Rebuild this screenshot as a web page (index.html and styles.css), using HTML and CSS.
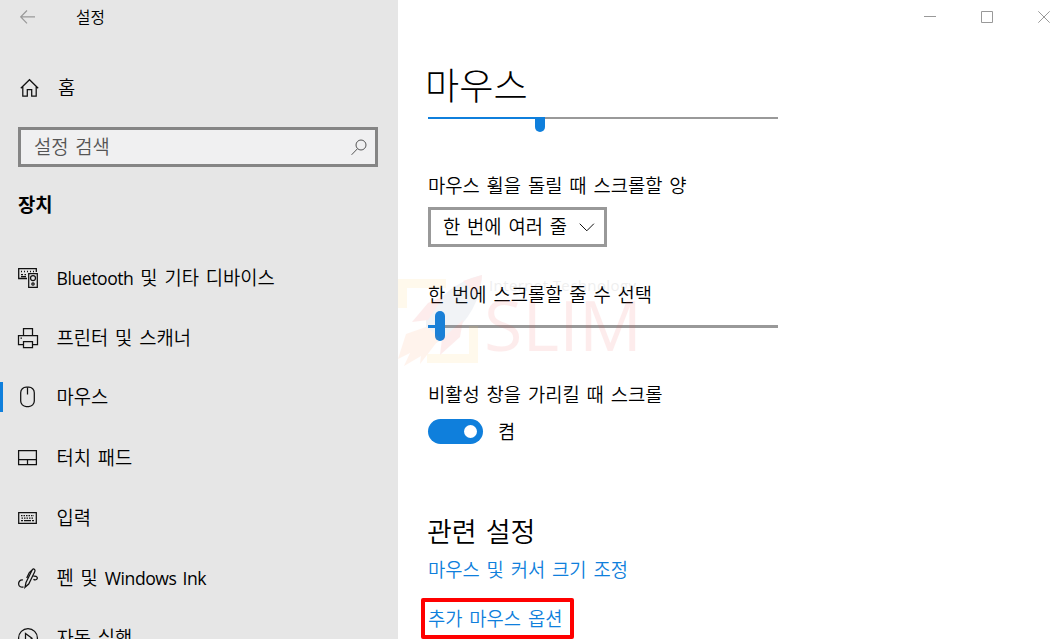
FILE: index.html
```html
<!DOCTYPE html>
<html lang="ko">
  <head>
    <meta charset="UTF-8" />
    <meta name="viewport" content="width=device-width, initial-scale=1.0" />
    <title>설정</title>
    <link rel="stylesheet" href="styles.css">
  </head>
  <body>
    <aside class="sidebar">
      <header class="titlebar">
        <svg class="back" width="16" height="14" viewBox="0 0 16 14"><path d="M7 .5.8 6.9 7 13.3M.8 6.9H15" /></svg>
        <span class="app-name">설정</span>
      </header>
      <a class="nav-item home">
        <svg class="icon" viewBox="0 0 20 20"><path d="M.8 10.3 9.5 1.7l8.7 8.6M2.8 8.8v9.4h4.5v-6.7h4.4v6.7h4.5V8.8" /></svg>
        <span>홈</span>
      </a>
      <div class="search">
        <span>설정 검색</span>
        <svg width="16" height="17" viewBox="0 0 16 17"><circle cx="10" cy="6" r="5" /><path d="M6.4 9.8.6 15.8" /></svg>
      </div>
      <h2 class="category">장치</h2>
      <nav>
        <a class="nav-item">
          <svg class="icon" viewBox="0 0 20 20">
            <path d="M9 10.5H.7V.7h17.6V4M3 3.5h1m2 0h1m2 0h1m2 0h1m2 0h1M3 6.7h2m1.5 0h1.5M3 8.7h5" stroke-width="1.3" />
            <path d="M10.7 5.7h8.6v13.6h-8.6z" /><circle cx="15" cy="10" r="2.5" /><circle cx="15" cy="16" r="1.2" />
          </svg>
          <span><span class="latin">Bluetooth</span> 및 기타 디바이스</span>
        </a>
        <a class="nav-item">
          <svg class="icon" viewBox="0 0 20 20"><path d="M5.5 7.5v-7h9v7M5.5 16.5h-5v-9h19v9h-5M5.5 13.5h9v6h-9zM2.5 10h1.5" /></svg>
          <span>프린터 및 스캐너</span>
        </a>
        <a class="nav-item active">
          <svg class="icon" viewBox="0 0 20 20"><rect x="2.7" y=".2" width="13.6" height="19.3" rx="5.5" /><path d="M9.5.5v7" /></svg>
          <span>마우스</span>
        </a>
        <a class="nav-item">
          <svg class="icon" viewBox="0 0 20 20"><path d="M.6 2.6h17.8v14H.6zM.6 11.5h17.8M9.5 11.5v5" /></svg>
          <span>터치 패드</span>
        </a>
        <a class="nav-item">
          <svg class="icon" viewBox="0 0 20 20"><path d="M.7 4.7h17.6v10.600H.7z" /><path d="M3 7.5h13M3.5 10h12" stroke-dasharray="1.5 1" /><path d="M3 12.7h2m1 0h7m1 0h2" /></svg>
          <span>입력</span>
        </a>
        <a class="nav-item">
          <svg class="icon" viewBox="0 0 20 20">
            <path d="M7 19.300 8 14.500 14.300 1.800q1.500-2 2.600.2.300 1-.3 2L10.700 16zM8.700 10 11.300 4.600 15.400.8M5 12C2 11.500.5 13.700.6 16c.2 2.800 2.800 3.700 4.900 2.900M15.500 8.300c3.500-.6 4.700 1.800 3.200 3-1 .8-2.400.7-3.200 0" />
          </svg>
          <span>펜 및 <span class="latin">Windows Ink</span></span>
        </a>
        <a class="nav-item">
          <svg class="icon" viewBox="0 0 20 20"><circle cx="10" cy="10" r="9.4" /><path d="M7.5 5.5v9.500l6.500-4.700z" /></svg>
          <span>자동 실행</span>
        </a>
      </nav>
    </aside>

    <main class="content">
      <header class="window-controls">
        <svg width="12" height="12" viewBox="0 0 12 12"><path d="M0 5.5h12" /></svg>
        <svg width="12" height="12" viewBox="0 0 12 12"><path d="M.5.5h11v11H.5z" /></svg>
        <svg width="12" height="12" viewBox="0 0 12 12"><path d="m.3.3 11.4 11.4M11.7.3.3 11.7" /></svg>
      </header>

      <h1>마우스</h1>
      <div class="slider clipped">
        <div class="fill" style="width: 32%"></div>
        <div class="thumb"></div>
        <div class="track"></div>
      </div>

      <p class="label wheel-label">마우스 휠을 돌릴 때 스크롤할 양</p>
      <div class="select">
        <span>한 번에 여러 줄</span>
        <svg width="16" height="9" viewBox="0 0 16 9"><path d="m.7.7 7.1 7.1L14.900.7" /></svg>
      </div>

      <p class="label lines-label">한 번에 스크롤할 줄 수 선택</p>
      <div class="slider lines">
        <div class="fill" style="width: 2%"></div>
        <div class="thumb"></div>
        <div class="track"></div>
      </div>

      <p class="label inactive-label">비활성 창을 가리킬 때 스크롤</p>
      <div class="toggle-row">
        <div class="toggle"><div class="knob"></div></div>
        <span>켬</span>
      </div>

      <h2 class="related">관련 설정</h2>
      <a class="link">마우스 및 커서 크기 조정</a>
      <a class="link highlighted">추가 마우스 옵션</a>

      <svg class="watermark" width="250" height="100" viewBox="0 0 250 100">
        <path class="frame" d="M0 9h48v9H9v20H0zM80 56v37H29v-9h42V56z" />
        <path class="body" d="M28 50Q46 14 84 5 82 42 50 67L38 73 28 60z" />
        <path class="fins" d="M84 5 65 11l12 13q7-10 7-19zM46 26 30 33 14 52l16-2zM65 50l-3 17-20 18 2-16z" />
        <path class="flame" d="m28 57-20 7-8 25 12-6-6 13 17-10-1 8 20-26z" />
        <text class="wm-small" x="91" y="21" textLength="147">Internet Technology</text>
        <text class="wm-big" x="86" y="81" textLength="158">SLIM</text>
      </svg>
    </main>
  </body>
</html>
```
FILE: styles.css
```css
:root {
  --accent: #0f7fdc;
  --side-bg: #e6e6e6;
  --line: #999;
  --font: 'Open Sans', 'Noto Sans CJK KR', sans-serif;
}
* { box-sizing: border-box; }
html, body { margin: 0; height: 100%; overflow: hidden; }
body {
  display: flex;
  font-family: var(--font);
  font-size: 18.75px;
  font-weight: 350;
  word-spacing: 2px;
  line-height: 30px;
  color: #000;
  background: #fff;
}
h1, h2, p { margin: 0; }
svg { flex: none; fill: none; stroke: #111; }

.sidebar { width: 398px; flex: none; background: var(--side-bg); }
.titlebar { display: flex; align-items: center; height: 34px; padding-left: 20px; }
.titlebar .back { stroke: #999; stroke-width: 1.2; }
.app-name { margin-left: 40px; font-size: 15.7px; }
.nav-item {
  display: flex;
  align-items: center;
  gap: 18.5px;
  height: 60px;
  padding-left: 18px;
  white-space: nowrap;
}
.latin { font-size: 17.6px; font-weight: 400; letter-spacing: -0.45px; word-spacing: 2px; }
.icon { width: 20px; height: 20px; stroke-width: 1.25; overflow: visible; }
.home { margin-top: 24px; padding-left: 19.5px; }
.active { border-left: 3px solid var(--accent); height: 30px; margin: 14px 0 16px; padding-left: 15px; }
.search {
  display: flex;
  justify-content: space-between;
  align-items: center;
  width: 360px;
  height: 40px;
  margin: 9px 0 0 18px;
  padding: 0 8px 0 13px;
  border: 3px solid #858585;
  background: #f0f0f1;
  color: #555;
}
.search svg { stroke: #555; }
.category { margin: 23px 0 28px 18px; font-size: 18.75px; font-weight: 700; }

.content { position: relative; flex: 1; padding-left: 30px; }
.window-controls { display: flex; justify-content: flex-end; align-items: center; gap: 45px; height: 34px; padding-right: 14px; }
.window-controls svg { stroke: #999; }
h1 { margin: 27px 0 6px -3px; font-size: 37.2px; font-weight: 300; line-height: 50px; }
.slider { display: flex; align-items: center; width: 350px; height: 30px; }
.slider .fill { height: 3px; background: var(--accent); }
.slider .track { flex: 1; height: 3px; background: var(--line); }
.slider .thumb { width: 10px; height: 30px; border-radius: 5px; background: var(--accent); }
.clipped { height: 15px; align-items: flex-start; }
.clipped .fill, .clipped .track { height: 2px; }
.clipped .fill { margin-right: -5px; }
.clipped .thumb { height: 15px; border-radius: 0 0 5px 5px; }
.wheel-label { margin-top: 39px; }
.select {
  display: flex;
  align-items: center;
  justify-content: space-between;
  width: 179px;
  height: 40px;
  margin-top: 6px;
  padding: 0 9px 0 12px;
  border: 3px solid var(--line);
}
.lines-label { margin-top: 33px; }
.lines { margin-top: 1px; }
.inactive-label { margin-top: 39px; }
.toggle-row { display: flex; align-items: center; gap: 15px; height: 25px; margin-top: 9px; }
.toggle { display: flex; align-items: center; justify-content: flex-end; width: 55px; height: 25px; padding-right: 6px; border-radius: 13px; background: var(--accent); }
.knob { width: 13px; height: 13px; border-radius: 50%; background: #fff; }
.related { margin: 68px 0 3px -1px; font-size: 27px; font-weight: 350; line-height: 40px; }
.link { display: block; color: var(--accent); }
.highlighted {
  width: 153px;
  height: 41px;
  margin: 13px 0 0 -7px;
  padding: 2px 0 0 3px;
  border: 4px solid #f00;
  border-radius: 2px;
  white-space: nowrap;
}

.watermark { position: absolute; left: 0; top: 270px; opacity: 0.1; stroke: none; pointer-events: none; }
.watermark .frame { fill: #ffc850; }
.watermark .body { fill: #8090b0; }
.watermark .fins { fill: #f45050; }
.watermark .flame { fill: #ff9050; }
.wm-small { font-size: 15px; font-weight: 400; word-spacing: 0; fill: #666; }
.wm-big { font-size: 70px; font-weight: 400; fill: #f45050; }
```
